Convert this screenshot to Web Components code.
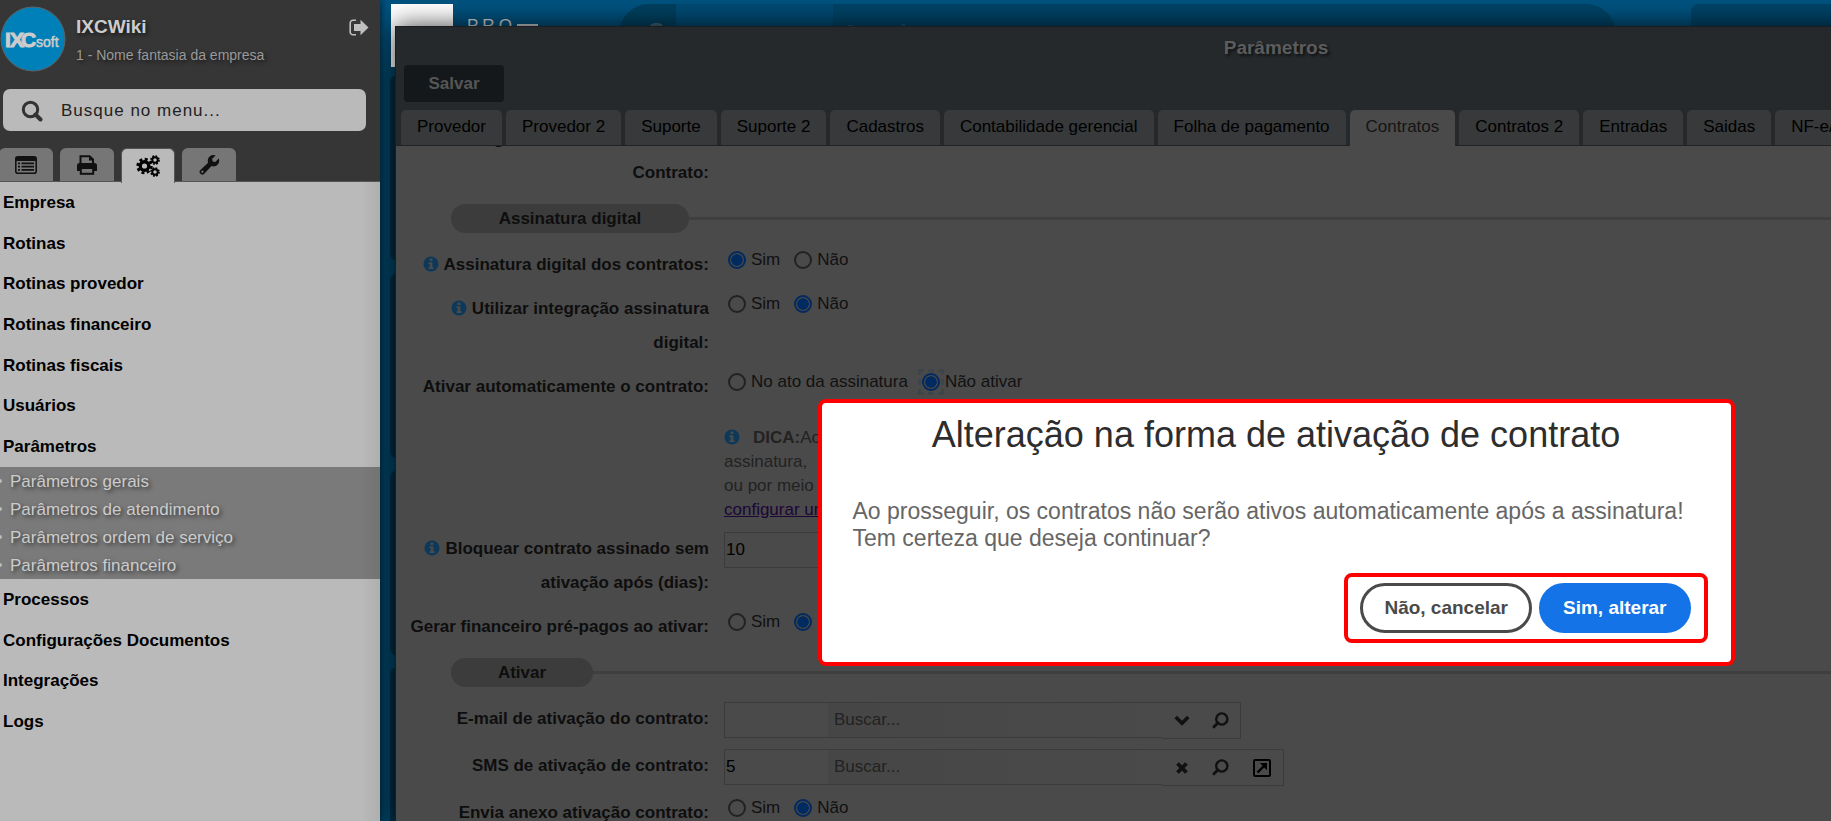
<!DOCTYPE html>
<html lang="pt-BR">
<head>
<meta charset="utf-8">
<title>IXCWiki - Parâmetros</title>
<style>
html, body { margin: 0; height: 100%; overflow: hidden; }
body { font: 17px/20px "Liberation Sans", Arial, sans-serif; color: #0e0e0e; background: #004263; }
</style>
</head>
<body>
<app-shell>
  <side-panel slot="side" user="IXCWiki" company="1 - Nome fantasia da empresa">
    <menu-group slot="menu" style="--h:285px">
      <menu-item>Empresa</menu-item>
      <menu-item>Rotinas</menu-item>
      <menu-item>Rotinas provedor</menu-item>
      <menu-item>Rotinas financeiro</menu-item>
      <menu-item>Rotinas fiscais</menu-item>
      <menu-item>Usuários</menu-item>
      <menu-item>Parâmetros</menu-item>
    </menu-group>
    <sub-menu slot="menu">
      <menu-item sub>Parâmetros gerais</menu-item>
      <menu-item sub>Parâmetros de atendimento</menu-item>
      <menu-item sub>Parâmetros ordem de serviço</menu-item>
      <menu-item sub>Parâmetros financeiro</menu-item>
    </sub-menu>
    <menu-group slot="menu" style="--h:163px">
      <menu-item>Processos</menu-item>
      <menu-item>Configurações Documentos</menu-item>
      <menu-item>Integrações</menu-item>
      <menu-item>Logs</menu-item>
    </menu-group>
  </side-panel>

  <desk-background></desk-background>

  <app-window heading="Parâmetros">
    <window-tab slot="tab">Provedor</window-tab>
    <window-tab slot="tab">Provedor 2</window-tab>
    <window-tab slot="tab">Suporte</window-tab>
    <window-tab slot="tab">Suporte 2</window-tab>
    <window-tab slot="tab">Cadastros</window-tab>
    <window-tab slot="tab">Contabilidade gerencial</window-tab>
    <window-tab slot="tab">Folha de pagamento</window-tab>
    <window-tab slot="tab" active>Contratos</window-tab>
    <window-tab slot="tab">Contratos 2</window-tab>
    <window-tab slot="tab">Entradas</window-tab>
    <window-tab slot="tab">Saidas</window-tab>
    <window-tab slot="tab">NF-e/</window-tab>

    <form-row class="first"><span slot="label"><span style="padding-right:205px">g</span><br>Contrato:</span></form-row>
    <section-title style="--w:238px">Assinatura digital</section-title>
    <form-row info><span slot="label">Assinatura digital dos contratos:</span>
      <radio-group options="Sim|Não" selected="0" label="Assinatura digital dos contratos"></radio-group></form-row>
    <form-row info><span slot="label">Utilizar integração assinatura digital:</span>
      <radio-group options="Sim|Não" selected="1" label="Utilizar integração assinatura digital"></radio-group></form-row>
    <form-row><span slot="label">Ativar automaticamente o contrato:</span>
      <radio-group options="No ato da assinatura|Não ativar" selected="1" focused label="Ativar automaticamente o contrato"></radio-group></form-row>
    <form-row class="tip"><tip-text></tip-text></form-row>
    <form-row info><span slot="label">Bloquear contrato assinado sem ativação após (dias):</span>
      <text-field value="10" label="Bloquear contrato assinado sem ativação após (dias)"></text-field></form-row>
    <form-row><span slot="label">Gerar financeiro pré-pagos ao ativar:</span>
      <radio-group options="Sim|Não" selected="1" label="Gerar financeiro pré-pagos ao ativar"></radio-group></form-row>
    <section-title style="--w:142px">Ativar</section-title>
    <form-row><span slot="label">E-mail de ativação do contrato:</span>
      <lookup-field icons="down search" label="E-mail de ativação do contrato"></lookup-field></form-row>
    <form-row><span slot="label">SMS de ativação de contrato:</span>
      <lookup-field value="5" icons="clear search open" label="SMS de ativação de contrato"></lookup-field></form-row>
    <form-row><span slot="label">Envia anexo ativação contrato:</span>
      <radio-group options="Sim|Não" selected="1" label="Envia anexo ativação contrato"></radio-group></form-row>

    <confirm-dialog slot="dialog" heading="Alteração na forma de ativação de contrato" cancel="Não, cancelar" accept="Sim, alterar">Ao prosseguir, os contratos não serão ativos automaticamente após a assinatura!<br>Tem certeza que deseja continuar?</confirm-dialog>
  </app-window>
</app-shell>

<script>
const ICONS = {
  search: '<svg width="22" height="22" viewBox="0 0 22 22"><circle cx="9.5" cy="9.5" r="7.2" fill="none" stroke="currentColor" stroke-width="3"/><path d="M14.5 14.5l5 5" stroke="currentColor" stroke-width="4" stroke-linecap="round"/></svg>',
  exit: '<svg width="20" height="17" viewBox="0 0 20 17"><path d="M7 1.2H4A2.8 2.8 0 0 0 1.2 4v9A2.8 2.8 0 0 0 4 15.800H7" fill="none" stroke="currentColor" stroke-width="1.600"/><path d="M5 5h6.500V.8L19.500 8.500 11.500 16.200V12H5z" fill="currentColor"/></svg>',
  list: '<svg width="22" height="18" viewBox="0 0 22 18"><rect x=".8" y=".8" width="20.400" height="16.400" rx="2" fill="none" stroke="currentColor" stroke-width="1.600"/><path d="M1 1h20v4H1zM3 6.500h2v1.700H3zM6.500 6.500H19v1.700H6.500zM3 9.800h2v1.700H3zM6.500 9.800H19v1.700H6.500zM3 13h2v1.700H3zM6.500 13H19v1.700H6.500z" fill="currentColor"/></svg>',
  print: '<svg width="22" height="20" viewBox="0 0 22 20"><path d="M4.500 9V1.200H13.500L17 4.500V9" fill="none" stroke="currentColor" stroke-width="2"/><path d="M13 1v4.500h4.500z" fill="currentColor"/><path d="M3.500 8h15A2.500 2.500 0 0 1 21 10.500V16h-4v-3.500H5V16H1v-5.500A2.500 2.500 0 0 1 3.500 8z" fill="currentColor"/><rect x="4.800" y="13" width="12.400" height="5.800" fill="none" stroke="currentColor" stroke-width="2"/></svg>',
  cogs: '<svg width="25" height="22" viewBox="0 0 25 22" fill="none" stroke="currentColor"><circle cx="8.500" cy="11" r="4.300" stroke-width="3.400"/><circle cx="8.500" cy="11" r="6.900" stroke-width="2.600" stroke-dasharray="3 2.419"/><circle cx="19" cy="5" r="2.700" stroke-width="1.900"/><circle cx="19" cy="5" r="4" stroke-width="1.700" stroke-dasharray="1.800 1.342"/><circle cx="19" cy="17" r="2.700" stroke-width="1.900"/><circle cx="19" cy="17" r="4" stroke-width="1.700" stroke-dasharray="1.800 1.342"/></svg>',
  wrench: '<svg width="21" height="21" viewBox="0 0 24 24"><path fill="currentColor" fill-rule="evenodd" d="M1.300 18.500l9.100-8.600c-.9-2.300-.4-5 1.500-6.900 2-2 4.800-2.500 7.200-1.300L15 5.500l.6 3 3 .6 3.900-3.900c1.100 2.400.7 5.100-1.300 7.100-1.900 1.900-4.600 2.400-6.900 1.500l-8.600 9.100c-1 1-2.500 1-3.500 0l-.9-.9c-1-1-1-2.500 0-3.500zM3.900 18.800a1.300 1.300 0 1 0 .01 0z"/></svg>',
  info: '<svg width="16" height="16" viewBox="0 0 16 16"><circle cx="8" cy="8" r="7.500" fill="#0c385a"/><path d="M6.600 2.600h2.800v2.300H6.600zM5.500 6.300h3.900v5h1.100v1.700h-5v-1.700h1.100V8H5.500z" fill="#4a4a4a"/></svg>',
  down: '<svg width="16" height="11" viewBox="0 0 16 11"><path d="M1.700 2L8 8.200 14.300 2" fill="none" stroke="currentColor" stroke-width="3.600"/></svg>',
  find: '<svg width="17" height="17" viewBox="0 0 17 17"><circle cx="9.800" cy="7" r="5.600" fill="none" stroke="currentColor" stroke-width="2.400"/><path d="M5.800 11L2 14.800" stroke="currentColor" stroke-width="3" stroke-linecap="round"/></svg>',
  clear: '<svg width="12" height="12" viewBox="0 0 12 12"><path d="M1.500 1.500l9 9M10.500 1.500l-9 9" stroke="currentColor" stroke-width="3.800"/></svg>',
  open: '<svg width="18" height="18" viewBox="0 0 18 18"><rect x="1" y="1" width="16" height="16" rx="1" fill="none" stroke="#000" stroke-width="2"/><path d="M4.500 13.500L11 7" stroke="#000" stroke-width="2.400"/><path d="M6.800 4h7.200v7.200z" fill="#000"/></svg>'
};

function define(name, css, html) {
  customElements.define(name, class extends HTMLElement {
    connectedCallback() {
      if (this.shadowRoot) return;
      const a = n => this.getAttribute(n) || '';
      this.attachShadow({ mode: 'open' }).innerHTML =
        '<style>*{box-sizing:border-box}' + css + '</style>' + (typeof html === 'function' ? html(a, this) : html);
    }
  });
}

define('app-shell', `
  :host { display: grid; grid-template-columns: 380px minmax(0,1fr); height: 100vh; overflow: hidden; }
  aside { position: relative; z-index: 2; display: grid; box-shadow: 0 0 8px rgba(0,0,0,.7); }
  main { position: relative; overflow: hidden; display: grid; }
`, '<aside><slot name="side"></slot></aside><main><slot></slot></main>');

define('side-panel', `
  :host { display: flex; flex-direction: column; background: linear-gradient(to left, rgba(0,0,0,.06), transparent 20px) #bababa; overflow: hidden; }
  header { background: #363636; display: flex; flex-direction: column; height: 182px; border-bottom: 1px solid #555; }
  .user { display: flex; height: 89px; padding-top: 6px; gap: 10px; }
  .names { flex: 1; padding-top: 7px; line-height: 28px; text-shadow: 2px 2px 4px rgba(0,0,0,.6); }
  .name { font-size: 19px; font-weight: bold; color: #ccc; }
  .company { font-size: 14px; color: #999; }
  .exit { border: 0; background: none; padding: 13px 11px 0 0; align-self: flex-start; color: #bfbfbf; }
  .search { display: flex; align-items: center; gap: 18px; height: 42px; margin: 0 14px 0 3px; padding: 1px 0 0 18px; border-radius: 7px; background: #bababa; color: #333; }
  .search svg { display: block; }
  input { flex: 1; min-width: 0; border: 0; outline: 0; padding: 0; background: none; font: 17px/20px "Liberation Sans", Arial, sans-serif; letter-spacing: 1px; color: #222; }
  input::placeholder { color: #222; }
  .tabs { display: flex; gap: 7px; margin: 17px 0 0 -1px; height: 33px; }
  .tabs button { width: 54px; height: 33px; border: 0; padding: 0; border-radius: 6px 6px 0 0; background: #767676; color: #111; display: grid; place-items: center; }
  .tabs .on { height: 35px; background: #bababa; color: #000; border: solid #555; border-width: 1px 1px 0; }
`, a => `<header>
  <div class="user">
    <svg width="66" height="66" viewBox="0 0 66 66" font-family="Liberation Sans, Arial, sans-serif" font-weight="bold" fill="#ccc"><circle cx="33" cy="33" r="32" fill="#0080b8" stroke="#5b6468" stroke-width="1"/><text x="5 10 21" y="41" font-size="21" stroke="#ccc" stroke-width="1">IXC</text><text x="36" y="41" font-size="14" font-weight="normal" stroke="#ccc" stroke-width=".5">soft</text></svg>
    <div class="names"><div class="name">${a('user')}</div><div class="company">${a('company')}</div></div>
    <button class="exit" aria-label="Sair">${ICONS.exit}</button>
  </div>
  <label class="search">${ICONS.search}<input type="text" placeholder="Busque no menu..." aria-label="Busque no menu"></label>
  <div class="tabs"><button aria-label="Cadastros">${ICONS.list}</button><button aria-label="Relatórios">${ICONS.print}</button><button class="on" aria-label="Configurações">${ICONS.cogs}</button><button aria-label="Ferramentas">${ICONS.wrench}</button></div>
</header><nav><slot name="menu"></slot></nav>`);

define('menu-group', ':host { display: grid; grid-auto-rows: 1fr; height: var(--h); }', '<slot></slot>');
define('sub-menu', ':host { display: block; background: linear-gradient(to left, rgba(0,0,0,.06), transparent 20px) #7a7a7a; }', '<slot></slot>');
define('menu-item', `
  :host { display: flex; align-items: center; }
  a { color: #000; text-decoration: none; font-weight: bold; padding: 1px 0 0 3px; }
  :host([sub]) { height: 28px; }
  :host([sub]) a { color: #ccc; font-weight: normal; padding-left: 8px; text-shadow: 2px 2px 4px rgba(0,0,0,.6); }
  :host([sub])::before { content: ""; width: 4px; height: 4px; border-radius: 2px; background: #bbb; margin-left: -2px; }
`, '<a href="#"><slot></slot></a>');

define('desk-background', `
  :host { grid-area: 1 / 1; display: block; background: linear-gradient(#00527f, #00527f 10px, #004263 80px); }
  svg { position: absolute; left: 0; top: 0; }
  .logo { position: absolute; left: 11px; top: 4px; width: 62px; height: 63px; background: #fff; }
  .brand { position: absolute; left: 87px; top: 17px; font: 17px/17px "Liberation Sans", sans-serif; color: #d0d4d8; display: flex; gap: 4px; }
  .bar { position: absolute; top: 4px; height: 60px; background: #004366; }
  .b1 { left: 239px; right: 215px; border-radius: 32px; background: linear-gradient(90deg, #00405f 57px, #004a73 57px, #004a73 214px, #004366 214px); }
  .b2 { left: 1311px; right: -20px; border-radius: 8px; }
  .card { position: absolute; left: 10px; width: 60px; height: 186px; border-radius: 8px; background: #002c44; }
`, `<div class="bar b1"></div><div class="bar b2"></div>
  <div class="logo"></div><div class="brand"><span>P</span><span>R</span><span>O</span></div>
  <svg width="700" height="30"><path d="M137 25h21" stroke="#c8ccd0" stroke-width="2"/><path d="M271 26a9 7 0 0 1 11 0" fill="none" stroke="#3f6275" stroke-width="3"/><path d="M468 26h5M522 25h3" stroke="#3f6275" stroke-width="1"/></svg>
  <div class="card" style="top:75px"></div><div class="card" style="top:273px"></div><div class="card" style="top:470px"></div><div class="card" style="top:667px"></div>`);

define('app-window', `
  :host { position: absolute; left: 15px; right: -326px; top: 26px; bottom: 0; display: flex; flex-direction: column; background: #4a4a4a; border: 1px solid #1b1d1f; border-bottom: 0; box-shadow: 0 0 24px rgba(0,0,0,.75); overflow: clip; overflow-clip-margin: 30px; }
  header { background: #25292c; height: 119px; flex: none; border-bottom: 1px solid #202325; }
  h1 { margin: 0; padding-top: 6px; font-size: 19px; line-height: 30px; text-align: center; color: #5c5c5c; text-shadow: 2px 2px 3px rgba(0,0,0,.6); }
  .save { display: block; margin: 2px 0 8px 8px; width: 100px; height: 37px; border: 0; border-radius: 4px; background: #14181b; color: #565656; font: bold 17px/20px "Liberation Sans", Arial, sans-serif; }
  .tabs { display: flex; gap: 4px; padding-left: 5px; height: 36px; }
  .body { flex: 1; min-height: 0; overflow: hidden; }
  .body > div { margin-top: -24px; }
  ::slotted(form-row) { margin-bottom: 10px; }
`, a => `<header><h1>${a('heading')}</h1><button class="save">Salvar</button><div class="tabs"><slot name="tab"></slot></div></header>
  <div class="body"><div><slot></slot></div></div><slot name="dialog"></slot>`);

define('window-tab', `
  :host { display: block; flex: none; }
  button { display: block; height: 35px; padding: 0 16px 2px; border: 0; border-radius: 5px 5px 0 0; background: #37393a; color: #000; font: 17px/20px "Liberation Sans", Arial, sans-serif; white-space: nowrap; }
  :host([active]) button { height: 36px; padding-bottom: 3px; background: #4a4a4a; color: #141414; }
`, '<button role="tab"><slot></slot></button>');

define('section-title', `
  :host { display: grid; grid-template-columns: 55px var(--w) 1fr; align-items: center; height: 29px; margin: 14px 0 15px; }
  h2 { grid-column: 2; margin: 0; border-radius: 15px; background: #3c3c3c; text-align: center; font-size: 17px; line-height: 29px; }
  i { height: 3px; background: #3f3f3f; }
`, '<h2><slot></slot></h2><i></i>');

define('form-row', `
  :host { display: grid; grid-template-columns: 313px 1fr; column-gap: 15px; }
  .label { text-align: right; font-weight: bold; line-height: 34px; }
  svg { vertical-align: -2px; margin-right: 5px; }
`, (a, el) => `<div class="label">${el.hasAttribute('info') ? ICONS.info : ''}<slot name="label"></slot></div><div><slot></slot></div>`);

define('radio-group', `
  :host { display: flex; gap: 14px; padding-left: 4px; height: 24px; color: #111; }
  label { display: flex; align-items: center; gap: 5px; line-height: 22px; white-space: nowrap; }
  input { display: block; appearance: none; margin: 0; width: 18px; height: 18px; border: 2px solid #222; border-radius: 50%; }
  input:checked { border-color: #002a60; background: #002a60; background-clip: content-box; padding: 1px; box-shadow: inset 0 0 0 1px #4a4a4a; }
  .focus { outline: 3px dashed #3e4548; outline-offset: 1px; }
`, (a, el) => a('options').split('|').map((t, i) => {
  const on = String(i) === a('selected');
  return `<label><span ${on && el.hasAttribute('focused') ? 'class="focus"' : ''}><input type="radio" name="r" ${on ? 'checked' : ''}></span>${t}</label>`;
}).join(''));

define('tip-text', `
  :host { display: block; padding: 12px 0 0; color: #222; line-height: 24px; white-space: pre; }
  svg { vertical-align: -2px; margin-right: 13px; }
  a { color: #1c0636; }
`, `<div>${ICONS.info}<strong>DICA:</strong>Ao</div><div>assinatura,</div><div>ou por meio</div><div><a href="#">configurar um</a></div>`);

define('text-field', `
  :host { display: block; }
  input { width: 520px; height: 36px; border: 1px solid #3b3b3b; padding: 0 1px; background: none; color: #000; font: 17px/20px "Liberation Sans", Arial, sans-serif; }
`, a => `<input type="text" value="${a('value')}" aria-label="${a('label')}">`);

define('lookup-field', `
  :host { display: flex; height: 37px; }
  input { height: 36px; border: 1px solid #3b3b3b; background: none; color: #000; font: 17px/20px "Liberation Sans", Arial, sans-serif; }
  .id { width: 104px; border-right: 0; padding: 0 1px; }
  .text { width: 334px; border-width: 1px 0; padding: 0 6px; background: linear-gradient(90deg, #464646, #4a4a4a); }
  .text::placeholder { color: #222; }
  .icons { display: flex; height: 37px; border: 1px solid #3b3b3b; border-left: 0; color: #111; }
  button { border: 0; background: none; padding: 0; width: 39px; display: grid; place-items: center; color: inherit; }
  button:nth-child(3) { width: 43px; }
`, a => `<input class="id" type="text" value="${a('value')}" aria-label="${a('label')}"><input class="text" type="text" placeholder="Buscar..." aria-label="Buscar">
  <div class="icons">${a('icons').split(' ').map(n => `<button aria-label="${n}">${ICONS[n === 'search' ? 'find' : n]}</button>`).join('')}</div>`);

define('confirm-dialog', `
  :host { position: absolute; inset: 0; display: grid; justify-items: center; align-items: start; padding-top: 372px; }
  section { width: 917px; max-width: 100%; border: 4px solid #f00; border-radius: 8px; background: #fff; padding: 9px 23px 19px 31px; }
  h2 { margin: 0; padding-right: 8px; font-size: 36px; font-weight: normal; line-height: 46px; text-align: center; color: #2d2d2d; }
  p { margin: 40px 0 21px; font-size: 23px; line-height: 27px; color: #666; }
  .actions { display: flex; gap: 7px; width: max-content; margin-left: auto; border: 4px solid #f00; border-radius: 8px; padding: 6px 13px 6px 12px; }
  button { height: 50px; border-radius: 25px; border: 3px solid #4a4a4a; background: #fff; color: #4a4a4a; padding: 0 21px; font: bold 19px/22px "Liberation Sans", Arial, sans-serif; }
  .ok { background: #1473e6; border-color: #1473e6; color: #fff; }
`, a => `<section role="dialog" aria-modal="true"><h2>${a('heading')}</h2><p><slot></slot></p><div class="actions"><button>${a('cancel')}</button><button class="ok">${a('accept')}</button></div></section>`);
</script>
</body>
</html>
